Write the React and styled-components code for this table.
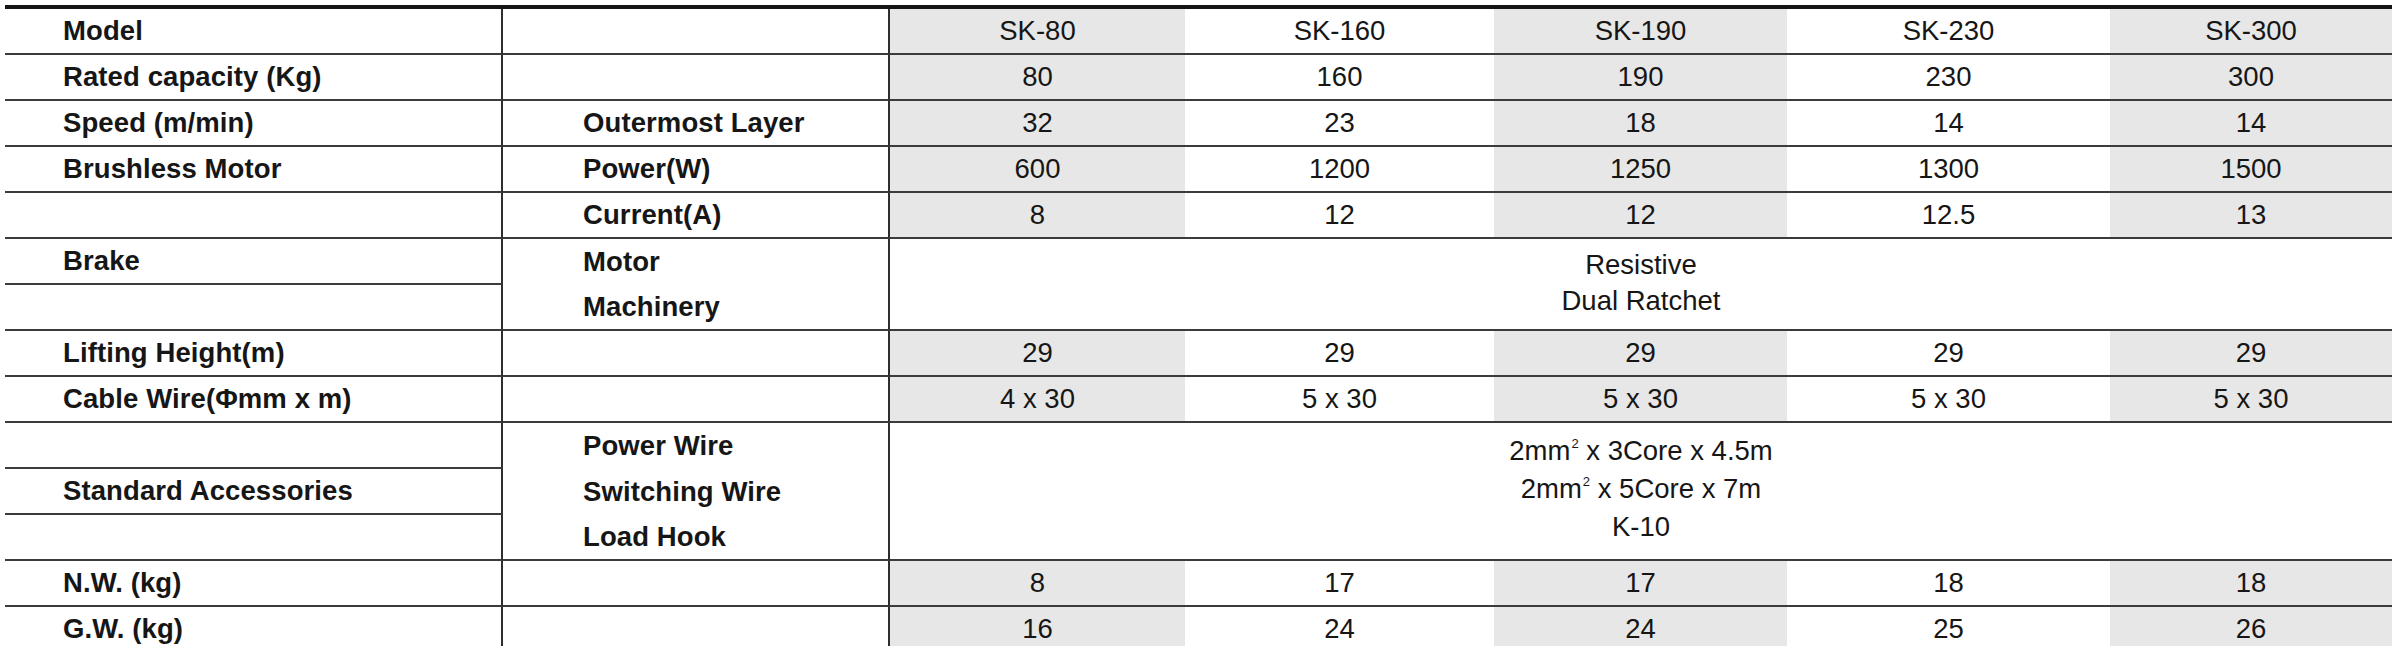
import React from "react";
import styled, { createGlobalStyle } from "styled-components";

const Global = createGlobalStyle`
  html, body { margin: 0; padding: 0; background: #ffffff; }
  body { font-family: "Liberation Sans", Arial, sans-serif; color: #161616; }
`;

const Page = styled.div`
  padding: 5px 0 0 5px;
  width: 2392px;
  box-sizing: border-box;
  overflow: hidden;
`;

const Grid = styled.div`
  display: grid;
  grid-template-columns: 498px 387px 295px 309px 293px 323px 1fr;
  grid-auto-rows: 46px;
  border-top: 4px solid #141414;
`;

const Cell = styled.div`
  box-sizing: border-box;
  display: flex;
  align-items: center;
  border-bottom: ${(p) => (p.$open ? "0" : "2px solid #3b3b3b")};
  font-size: 27.5px;
  line-height: 1;
  white-space: nowrap;
`;

const LabelCell = styled(Cell)`
  padding-left: ${(p) => (p.$sub ? "80px" : "58px")};
  border-right: 2px solid #2e2e2e;
  font-weight: 700;
  letter-spacing: 0.1px;
`;

const ValueCell = styled(Cell)`
  justify-content: center;
  background: ${(p) => (p.$shade ? "#e7e7e7" : "#ffffff")};
  font-weight: 400;
`;

const MergedCell = styled(Cell)`
  grid-column: span 5;
  grid-row: span ${(p) => p.$rows};
  flex-direction: column;
  justify-content: center;
  background: #ffffff;
  line-height: ${(p) => p.$lh}px;
  padding-bottom: ${(p) => p.$pb || 0}px;
`;

const Sup = styled.sup`
  font-size: 13px;
  line-height: 0;
  vertical-align: 12px;
  margin-left: 1px;
`;

const rows = [
  ["Model", "", ["SK-80", "SK-160", "SK-190", "SK-230", "SK-300"]],
  ["Rated capacity (Kg)", "", ["80", "160", "190", "230", "300"]],
  ["Speed (m/min)", "Outermost Layer", ["32", "23", "18", "14", "14"]],
  ["Brushless Motor", "Power(W)", ["600", "1200", "1250", "1300", "1500"]],
  ["", "Current(A)", ["8", "12", "12", "12.5", "13"]],
];

const rows2 = [
  ["Lifting Height(m)", "", ["29", "29", "29", "29", "29"]],
  ["Cable Wire(Φmm x m)", "", ["4 x 30", "5 x 30", "5 x 30", "5 x 30", "5 x 30"]],
];

const rows3 = [
  ["N.W. (kg)", "", ["8", "17", "17", "18", "18"]],
  ["G.W. (kg)", "", ["16", "24", "24", "25", "26"]],
];

const renderRows = (list) =>
  list.map(([a, b, vals]) => (
    <React.Fragment key={a + b}>
      <LabelCell>{a}</LabelCell>
      <LabelCell $sub>{b}</LabelCell>
      {vals.map((v, i) => (
        <ValueCell key={i} $shade={i % 2 === 0}>
          {v}
        </ValueCell>
      ))}
    </React.Fragment>
  ));

export default function App() {
  return (
    <>
      <Global />
      <Page>
        <Grid>
          {renderRows(rows)}

          <LabelCell>Brake</LabelCell>
          <LabelCell $sub $open>Motor</LabelCell>
          <MergedCell $rows={2} $lh={36} $pb={2}>
            <span>Resistive</span>
            <span>Dual Ratchet</span>
          </MergedCell>
          <LabelCell />
          <LabelCell $sub>Machinery</LabelCell>

          {renderRows(rows2)}

          <LabelCell />
          <LabelCell $sub $open>Power Wire</LabelCell>
          <MergedCell $rows={3} $lh={38} $pb={4}>
            <span>
              2mm<Sup>2</Sup> x 3Core x 4.5m
            </span>
            <span>
              2mm<Sup>2</Sup> x 5Core x 7m
            </span>
            <span>K-10</span>
          </MergedCell>
          <LabelCell>Standard Accessories</LabelCell>
          <LabelCell $sub $open>Switching Wire</LabelCell>
          <LabelCell />
          <LabelCell $sub>Load Hook</LabelCell>

          {renderRows(rows3)}
        </Grid>
      </Page>
    </>
  );
}
